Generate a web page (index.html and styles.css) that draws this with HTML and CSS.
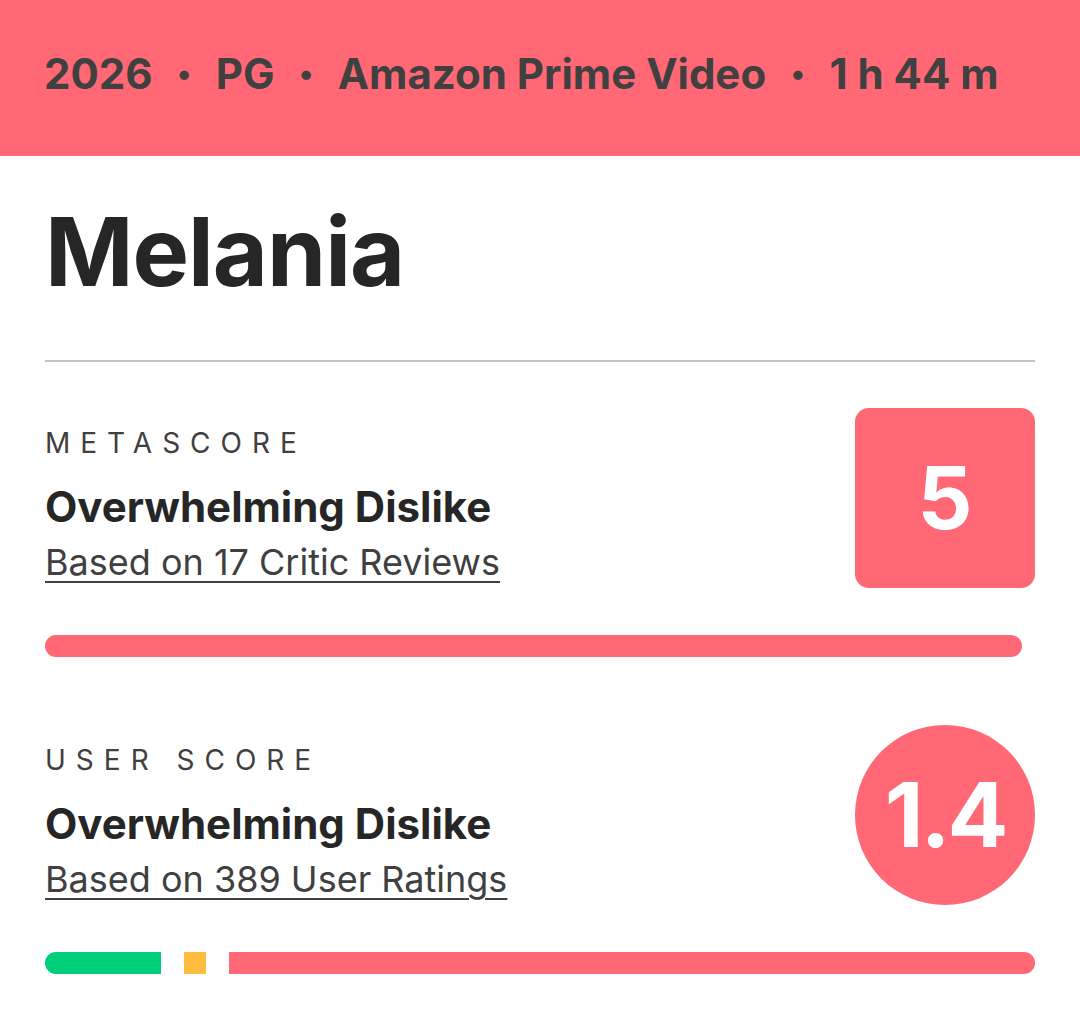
FILE: index.html
```html
<!DOCTYPE html>
<html lang="en">
<head>
  <meta charset="UTF-8" />
  <meta name="viewport" content="width=device-width, initial-scale=1.0"/>
  <title>Melania</title>
  <link rel="stylesheet" href="styles.css">
</head>
<body>
  <div class="meta-bar">
    <span>2026</span>
    <span class="dot">•</span>
    <span>PG</span>
    <span class="dot">•</span>
    <span>Amazon Prime Video</span>
    <span class="dot">•</span>
    <span>1 h 44 m</span>
  </div>

  <div class="content">
    <h1 class="title">Melania</h1>

    <div class="score-section">
      <div class="score-row">
        <div class="score-text">
          <div class="score-label">Metascore</div>
          <div class="score-verdict">Overwhelming Dislike</div>
          <a class="score-link" href="#">Based on 17 Critic Reviews</a>
        </div>
        <div class="score-badge square">5</div>
      </div>
      <div class="bar">
        <div class="bar-fill negative full"></div>
      </div>
    </div>

    <div class="score-section">
      <div class="score-row">
        <div class="score-text">
          <div class="score-label">User Score</div>
          <div class="score-verdict">Overwhelming Dislike</div>
          <a class="score-link" href="#">Based on 389 User Ratings</a>
        </div>
        <div class="score-badge circle">1.4</div>
      </div>
      <div class="bar split">
        <div class="bar-fill positive" style="width: 116px;"></div>
        <div class="bar-fill mixed" style="width: 22px;"></div>
        <div class="bar-fill negative grow"></div>
      </div>
    </div>
  </div>
</body>
</html>
```

FILE: styles.css
```css
body {
  margin: 0;
  padding: 0;
  background: #fff;
  font-family: 'Inter', 'Lato', sans-serif;
  color: #262626;
}

.meta-bar {
  background: #ff6874;
  height: 156px;
  box-sizing: border-box;
  display: flex;
  align-items: center;
  padding-left: 44px;
  padding-bottom: 10px;
  font-size: 42px;
  font-weight: 700;
  color: #404040;
  white-space: nowrap;
}

.meta-bar .dot {
  font-size: 30px;
  margin: 0 24.5px;
}

.content {
  padding: 0 45px;
}

.title {
  margin: 0;
  padding: 44px 0 55px;
  font-size: 95px;
  font-weight: 700;
  line-height: 1.1;
  letter-spacing: -1px;
  border-bottom: 2px solid #c4c4c4;
}

.score-section {
  padding-top: 46px;
  padding-bottom: 68px;
}

.score-section + .score-section {
  padding-top: 0;
}

.score-row {
  display: flex;
  justify-content: space-between;
  align-items: flex-start;
}

.score-text {
  padding-top: 18px;
}

.score-label {
  font-size: 28px;
  text-transform: uppercase;
  letter-spacing: 10px;
  color: #404040;
  line-height: 34px;
}

.score-verdict {
  margin-top: 23px;
  font-size: 42px;
  font-weight: 700;
  line-height: 48px;
}

.score-link {
  display: inline-block;
  margin-top: 9px;
  font-size: 36px;
  line-height: 44px;
  color: #404040;
  text-decoration: underline;
  text-underline-offset: 6px;
  text-decoration-thickness: 2px;
}

.score-badge {
  width: 180px;
  height: 180px;
  background: #ff6874;
  color: #fff;
  font-weight: 700;
  display: flex;
  align-items: center;
  justify-content: center;
}

.score-badge.square {
  border-radius: 14px;
  font-size: 86px;
}

.score-badge.circle {
  border-radius: 50%;
  font-size: 90px;
  letter-spacing: -3px;
}

.bar {
  margin-top: 47px;
  height: 22px;
  display: flex;
}

.bar.split {
  gap: 23px;
}

.bar-fill {
  height: 22px;
}

.bar-fill.full {
  width: 977px;
  border-radius: 11px;
}

.bar-fill.grow {
  flex: 1;
}

.bar-fill.positive {
  background: #00ce7a;
  border-radius: 11px 0 0 11px;
}

.bar-fill.mixed {
  background: #ffbd3f;
}

.bar-fill.negative {
  background: #ff6874;
}

.bar.split .bar-fill.negative {
  border-radius: 0 11px 11px 0;
}
```
